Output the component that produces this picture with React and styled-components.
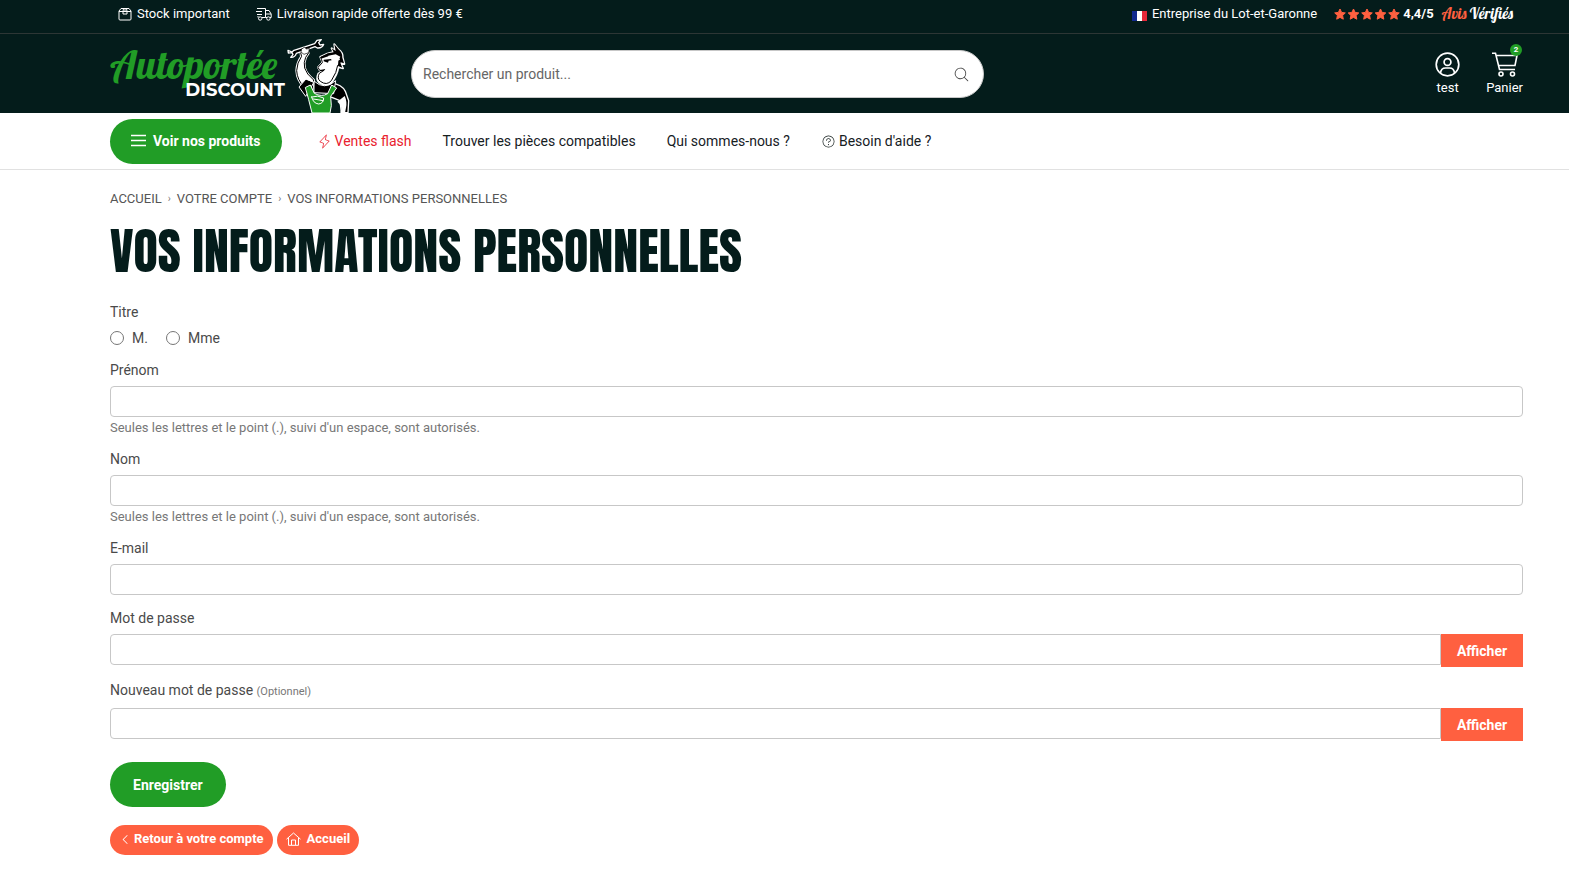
import styled, { createGlobalStyle } from 'styled-components';
import {
  PiCaretLeft,
  PiLightningLight,
  PiMagnifyingGlassLight,
  PiQuestionLight,
} from 'react-icons/pi';

const GlobalStyle = createGlobalStyle`
  :root {
    --dark: #041c1b;
    --green: #219d26;
    --orange: #ff6040;
    --red: #e9212e;
    --white: #ffffff;
    --text: #4a4a4a;
    --muted: #777777;
    --border: #c7c7c7;
  }

  * {
    box-sizing: border-box;
  }

  body {
    margin: 0;
    background-color: var(--white);
    color: var(--text);
    font-family: Roboto, 'Liberation Sans', sans-serif;
    font-size: 14px;
    line-height: 20px;
  }

  a {
    color: inherit;
    text-decoration: none;
  }

  button,
  input {
    font-family: inherit;
  }

  svg {
    flex-shrink: 0;
  }
`;

const Container = styled.div`
  padding: 0 46px 0 110px;
`;

const TopBar = styled(Container)`
  display: flex;
  justify-content: space-between;
  height: 34px;
  padding-right: 56px;
  padding-left: 118px;
  background-color: var(--dark);
  border-bottom: 1px solid #2d3635;
  color: var(--white);
  font-size: 13px;
`;

const TopGroup = styled.div`
  display: flex;
  gap: ${(props) => props.$gap};
  height: 28px;
`;

const TopItem = styled.span`
  display: flex;
  align-items: center;
  gap: 5px;
`;

const Flag = styled.span`
  width: 15px;
  height: 10px;
  margin-top: 3px;
  background: linear-gradient(
    90deg,
    #10298e 33%,
    var(--white) 33% 67%,
    #e5283a 67%
  );
`;

const Rating = styled.a`
  display: flex;
  align-items: center;
  gap: 2px;
  color: var(--white);
  font-weight: 700;
`;

const Verified = styled.span`
  margin-left: 6px;
  font-family: Lobster, 'Liberation Serif', serif;
  font-size: 15px;
  font-weight: 400;

  em {
    color: var(--orange);
    font-style: normal;
  }
`;

const Header = styled(Container)`
  display: grid;
  grid-template-columns: 240px minmax(200px, 573px) 1fr;
  column-gap: 61px;
  height: 79px;
  background-color: var(--dark);
  color: var(--white);
`;

const Logo = styled.a`
  display: flex;
  align-items: flex-end;
  height: 79px;
`;

const LogoText = styled.span`
  display: flex;
  flex-direction: column;
  align-items: flex-end;
  width: 178px;
  height: 66px;
`;

const LogoScript = styled.span`
  width: 100%;
  color: var(--green);
  font-family: Lobster, 'Liberation Serif', serif;
  font-size: 40px;
  line-height: 34px;
`;

const LogoName = styled.span`
  font-family: Montserrat, Inter, sans-serif;
  font-size: 18px;
  font-weight: 700;
  line-height: 18px;
`;

const Search = styled.form`
  display: flex;
  align-items: center;
  height: 48px;
  margin-top: 16px;
  padding: 0 13px 0 11px;
  background-color: var(--white);
  border: 1px solid var(--border);
  border-radius: 24px;

  input {
    flex: 1;
    min-width: 0;
    padding: 0;
    border: 0;
    outline: 0;
    color: var(--text);
    font-size: 14px;

    &::placeholder {
      color: #666666;
      opacity: 1;
    }
  }

  button {
    display: flex;
    padding: 0;
    background: none;
    border: 0;
    color: #444444;
    cursor: pointer;
  }
`;

const Actions = styled.div`
  display: flex;
  justify-content: flex-end;
  gap: 26px;
  padding-top: 18px;
`;

const Action = styled.a`
  position: relative;
  display: flex;
  flex-direction: column;
  align-items: center;
  font-size: 13px;

  svg {
    margin-bottom: 1px;
  }
`;

const Badge = styled.span`
  position: absolute;
  top: -8px;
  right: 1px;
  width: 12px;
  height: 12px;
  background-color: var(--green);
  border-radius: 50%;
  font-size: 8px;
  font-weight: 700;
  line-height: 12px;
  text-align: center;
`;

const Nav = styled(Container)`
  display: flex;
  align-items: center;
  gap: 35px;
  height: 57px;
  border-bottom: 1px solid #e1e1e1;
  color: #16201f;
`;

const NavLinks = styled.div`
  display: flex;
  gap: 31px;
`;

const NavLink = styled.a`
  display: flex;
  align-items: center;
  gap: 3px;
  color: ${(props) => (props.$flash ? 'var(--red)' : 'inherit')};
`;

const GreenButton = styled.button`
  display: inline-flex;
  align-items: center;
  gap: 7px;
  height: 45px;
  padding: 0 ${(props) => props.$pad};
  background-color: var(--green);
  border: 0;
  border-radius: 23px;
  color: var(--white);
  font-size: 14px;
  font-weight: 700;
  cursor: pointer;
`;

const Breadcrumb = styled.nav`
  display: flex;
  gap: 6px;
  padding-top: 19px;
  color: #555555;
  font-size: 13px;
  text-transform: uppercase;

  span {
    color: var(--muted);
    font-size: 10px;
  }
`;

const Title = styled.h1`
  margin: 12px 0 21px;
  color: var(--dark);
  font-family: Anton, 'Liberation Sans Narrow', 'Liberation Sans', sans-serif;
  font-size: 50px;
  font-weight: 400;
  line-height: 60px;
  text-transform: uppercase;
`;

const Civility = styled.fieldset`
  margin: 0 0 12px;
  padding: 0;
  border: 0;

  legend {
    padding: 0;
    margin-bottom: 6px;
  }

  div {
    display: flex;
    gap: 18px;
  }

  label {
    display: flex;
    align-items: center;
    gap: 8px;
  }

  input {
    width: 14px;
    height: 14px;
    margin: 0;
  }
`;

const FieldBox = styled.div`
  margin-bottom: 14px;

  label {
    display: block;
    margin-bottom: 6px;
  }

  label small {
    color: var(--muted);
    font-size: 11px;
  }

  p {
    height: 19px;
    margin: 0;
    color: var(--muted);
    font-size: 13px;
    line-height: 23px;
  }
`;

const InputRow = styled.div`
  display: flex;
  align-items: flex-start;
`;

const InputText = styled.input`
  flex: 1;
  min-width: 0;
  height: 31px;
  padding: 0 12px;
  border: 1px solid var(--border);
  border-radius: ${(props) => (props.$joined ? '4px 0 0 4px' : '4px')};
  color: var(--text);
  font-size: 14px;
  margin-bottom: -1px;
`;

const ShowButton = styled.button`
  width: 82px;
  height: 33px;
  margin-bottom: -1px;
  padding: 0;
  background-color: var(--orange);
  border: 0;
  color: var(--white);
  font-size: 14px;
  font-weight: 700;
  cursor: pointer;
`;

const Submit = styled.div`
  padding-top: 8px;
`;

const FooterLinks = styled.div`
  display: flex;
  gap: 4px;
  padding: 18px 0 24px;
`;

const Pill = styled.a`
  display: flex;
  align-items: center;
  gap: ${(props) => props.$gap};
  height: 30px;
  padding: 0 9px 2px;
  background-color: var(--orange);
  border-radius: 15px;
  color: var(--white);
  font-size: 13px;
  font-weight: 700;
`;

function BoxIcon() {
  return (
    <svg width="14" height="14" viewBox="0 0 14 14" fill="none" stroke="currentColor">
      <path d="M3 1.5h8L13 4v8q0 1-1 1H2q-1 0-1-1V4Z M1 4.5h12 M5.5 1.5L5 4.5V7h4V4.5l-.5-3 M7 1v3.5" />
    </svg>
  );
}

function TruckIcon() {
  return (
    <svg width="16" height="14" viewBox="0 0 16 14" fill="none" stroke="currentColor">
      <path d="M1 1.5h8.5v9H6 M10 3.5h3l2.2 3.5v3.5H14 M9.5 10.5H11 M10 7h5 M0 4.5h6 M1 7.5h5 M2 10.5V9" />
      <circle cx="4.2" cy="11.5" r="1.7" />
      <circle cx="12.4" cy="11.5" r="1.7" />
    </svg>
  );
}

function Stars() {
  return (
    <svg width="67" height="13" viewBox="0 0 67 13" fill="#ff6040" stroke="#ff6040" strokeLinejoin="round">
      {[0, 1, 2, 3, 4].map((i) => (
        <path
          key={i}
          transform={`translate(${i * 13.5} 0)`}
          d="M6 1l1.600 3.400 3.700.5-2.700 2.600.7 3.700L6 9.400l-3.300 1.800.7-3.700L.7 4.900l3.700-.5Z"
        />
      ))}
    </svg>
  );
}

function UserIcon() {
  return (
    <svg width="25" height="25" viewBox="0 0 25 25" fill="none" stroke="currentColor" strokeWidth="1.7">
      <circle cx="12.5" cy="12.5" r="11.3" />
      <circle cx="12.5" cy="10" r="3.4" />
      <path d="M5.5 21q.5-5 5-5h4q4.500 0 5 5" />
    </svg>
  );
}

function CartIcon() {
  return (
    <svg width="28" height="25" viewBox="0 0 28 25" fill="none" stroke="currentColor" strokeWidth="1.6">
      <path d="M1 1.300h3.500L8.500 17.500h15.500 M5 3.500h21l-2 10H7.500" />
      <circle cx="10" cy="22" r="2" />
      <circle cx="21.500" cy="22" r="2" />
    </svg>
  );
}

function MenuIcon() {
  return (
    <svg width="15" height="14" viewBox="0 0 15 14" stroke="currentColor" strokeWidth="1.6">
      <path d="M0 1.500h15 M0 6.500h15 M0 11.500h15" />
    </svg>
  );
}

function HomeIcon() {
  return (
    <svg width="15" height="14" viewBox="0 0 15 14" fill="none" stroke="currentColor">
      <path d="M.5 7.200L7.500 1l7 6.200 M2.500 6v7.300h10V6 M5.500 13V8h4v5" />
    </svg>
  );
}

function Mascot() {
  return (
    <svg width="65" height="75" viewBox="18 10 195 225" strokeLinejoin="round" strokeLinecap="round">
      {/* raised arm */}
      <path
        d="M65 50L84 44 88 56 80 68Q73 84 77 100 82 118 104 136L98 170 78 160Q54 136 53 108 54 84 67 66Z"
        fill="#fff"
        stroke="#fff"
        strokeWidth="8"
      />
      <path
        d="M65 50L84 44 88 56 80 68Q73 84 77 100 82 118 104 136L98 170 78 160Q54 136 53 108 54 84 67 66Z"
        fill="#fff"
        stroke="#000"
        strokeWidth="3"
      />
      {/* wrench */}
      <path
        d="M27 47L39 52 45 47 107 27 114 17 127 15 119 24 123 31 134 29Q130 41 115 40L108 36 52 56Q48 69 35 68L42 60 39 54 28 55Z"
        fill="#000"
        stroke="#fff"
        strokeWidth="4"
      />
      <path d="M68 43l8-5 7 5 8-2-2 13-14 5-8-6Z" fill="#fff" stroke="#000" strokeWidth="2" />
      {/* shirt and right arm */}
      <path d="M80 134L60 157 80 185 104 144Z" fill="#000" stroke="#fff" strokeWidth="3" />
      <path d="M158 146Q188 148 199 170L209 198 207 234H187L183 198 151 185Z" fill="#000" stroke="#fff" strokeWidth="4" />
      <path d="M175 201L197 184Q205 201 201 219L198 234H184Q192 214 175 201Z" fill="#fff" />
      <path d="M106 140Q136 168 170 138L164 177 106 174Z" fill="#000" stroke="#fff" strokeWidth="3" />
      {/* head */}
      <path
        d="M124 67L145 57 164 52 158 41 169 49 166 29 178 44Q192 54 191 69L196 88 184 85 192 101 178 97Q176 119 157 144 142 157 121 144 110 135 118 117L135 107 122 107 117 98 130 84 128 76Z"
        fill="#fff"
        stroke="#fff"
        strokeWidth="6"
      />
      <path
        d="M126 68L146 60 168 62 182 68 186 78 180 89 176 92Q174 112 157 138 143 154 124 140 113 131 121 116L135 107 122 107 117 98 130 84 128 76Z"
        fill="#fff"
        stroke="#000"
        strokeWidth="3"
      />
      {/* cap, hair and brow */}
      <path d="M124 67L146 56 164 53 158 41 170 49 166 29 178 44Q191 54 190 69L195 86 183 82 190 99 177 94 178 78 184 74 172 62 150 64 126 72Z" fill="#000" />
      <path d="M148 63L170 59 184 66 181 72 166 68 148 69Z" fill="#fff" />
      <path d="M134 75L156 73 158 77 149 78 147 84 134 80Z" fill="#000" />
      <path d="M124 108l13-3" stroke="#000" strokeWidth="3" fill="none" />
      {/* overalls */}
      <path
        d="M80 158L94 151 106 176Q128 188 146 177L158 151 173 160 155 185 157 213 153 235H99L89 195Z"
        fill="#219d26"
        stroke="#fff"
        strokeWidth="3"
      />
      <path d="M98 187Q117 180 134 190 134 206 119 208 102 206 98 187Z M102 193Q118 195 132 198" fill="none" stroke="#fff" strokeWidth="3" />
    </svg>
  );
}

function Field({ id, label, type = 'text', hint, optional, secret }) {
  return (
    <FieldBox>
      <label htmlFor={id}>
        {label} {optional && <small>(Optionnel)</small>}
      </label>
      <InputRow>
        <InputText id={id} type={type} $joined={secret} />
        {secret && <ShowButton type="button">Afficher</ShowButton>}
      </InputRow>
      {hint && <p>{hint}</p>}
    </FieldBox>
  );
}

const nameHint =
  "Seules les lettres et le point (.), suivi d'un espace, sont autorisés.";

export default function App() {
  return (
    <>
      <GlobalStyle />
      <TopBar>
        <TopGroup $gap="26px">
          <TopItem>
            <BoxIcon />
            Stock important
          </TopItem>
          <TopItem>
            <TruckIcon />
            Livraison rapide offerte dès 99 €
          </TopItem>
        </TopGroup>
        <TopGroup $gap="17px">
          <TopItem>
            <Flag />
            Entreprise du Lot-et-Garonne
          </TopItem>
          <Rating href="#avis">
            <Stars />
            4,4/5
            <Verified>
              <em>Avis</em> Vérifiés
            </Verified>
          </Rating>
        </TopGroup>
      </TopBar>

      <Header as="header">
        <Logo href="#accueil">
          <LogoText>
            <LogoScript>Autoportée</LogoScript>
            <LogoName>DISCOUNT</LogoName>
          </LogoText>
          <Mascot />
        </Logo>
        <Search>
          <input
            type="text"
            aria-label="Rechercher"
            placeholder="Rechercher un produit..."
          />
          <button type="button" aria-label="Rechercher">
            <PiMagnifyingGlassLight size={17} />
          </button>
        </Search>
        <Actions>
          <Action href="#compte">
            <UserIcon />
            test
          </Action>
          <Action href="#panier">
            <CartIcon />
            Panier
            <Badge>2</Badge>
          </Action>
        </Actions>
      </Header>

      <Nav as="nav">
        <GreenButton type="button" $pad="21px">
          <MenuIcon />
          Voir nos produits
        </GreenButton>
        <NavLinks>
          <NavLink href="#ventes" $flash>
            <PiLightningLight size={15} />
            Ventes flash
          </NavLink>
          <NavLink href="#pieces">Trouver les pièces compatibles</NavLink>
          <NavLink href="#nous">Qui sommes-nous ?</NavLink>
          <NavLink href="#aide">
            <PiQuestionLight size={15} />
            Besoin d'aide ?
          </NavLink>
        </NavLinks>
      </Nav>

      <Container as="main">
        <Breadcrumb>
          <a href="#accueil">Accueil</a>
          <span>›</span>
          <a href="#compte">Votre compte</a>
          <span>›</span>
          <a href="#infos">Vos informations personnelles</a>
        </Breadcrumb>
        <Title>Vos informations personnelles</Title>

        <form>
          <Civility>
            <legend>Titre</legend>
            <div>
              <label>
                <input type="radio" name="titre" />
                M.
              </label>
              <label>
                <input type="radio" name="titre" />
                Mme
              </label>
            </div>
          </Civility>
          <Field id="prenom" label="Prénom" hint={nameHint} />
          <Field id="nom" label="Nom" hint={nameHint} />
          <Field id="email" label="E-mail" type="email" />
          <Field id="mdp" label="Mot de passe" type="password" secret />
          <Field
            id="nouveau"
            label="Nouveau mot de passe"
            type="password"
            optional
            secret
          />
          <Submit>
            <GreenButton type="button" $pad="23px">
              Enregistrer
            </GreenButton>
          </Submit>
        </form>

        <FooterLinks>
          <Pill href="#compte" $gap="2px">
            <PiCaretLeft size={13} />
            Retour à votre compte
          </Pill>
          <Pill href="#accueil" $gap="6px">
            <HomeIcon />
            Accueil
          </Pill>
        </FooterLinks>
      </Container>
    </>
  );
}
